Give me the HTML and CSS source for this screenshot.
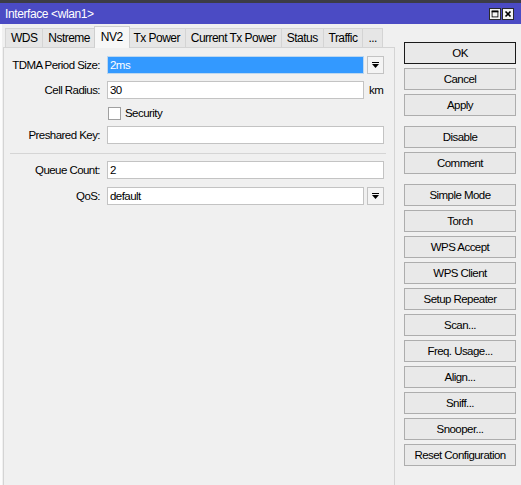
FILE: index.html
```html
<!DOCTYPE html>
<html lang="en">
    <head>
        <meta charset="UTF-8">
        <meta name="viewport" content="width=device-width, initial-scale=1.0">
        <title>Interface &lt;wlan1&gt;</title>
        <link rel="stylesheet" href="styles.css">
    </head>

    <body>
        <div class="window">
            <div class="titlebar">
                <span class="title">Interface &lt;wlan1&gt;</span>
                <div class="title-btns">
                    <span class="tbtn">
                        <svg width="12" height="12" viewBox="0 0 12 12"><rect x="2.5" y="2.5" width="7" height="7" fill="none" stroke="#000" stroke-width="1"/><line x1="2" y1="3" x2="10" y2="3" stroke="#000" stroke-width="2"/></svg>
                    </span>
                    <span class="tbtn">
                        <svg width="12" height="12" viewBox="0 0 12 12"><path d="M3 3 L9 9 M9 3 L3 9" stroke="#000" stroke-width="2"/></svg>
                    </span>
                </div>
            </div>

            <div class="main">
                <div class="left">
                    <div class="tabs">
                        <div class="tab">WDS</div>
                        <div class="tab">Nstreme</div>
                        <div class="tab active">NV2</div>
                        <div class="tab">Tx Power</div>
                        <div class="tab">Current Tx Power</div>
                        <div class="tab">Status</div>
                        <div class="tab">Traffic</div>
                        <div class="tab">...</div>
                    </div>
                    <div class="panel">
                        <div class="row">
                            <label class="lbl">TDMA Period Size:</label>
                            <div class="field selected">2ms</div>
                            <div class="drop">
                                <svg width="9" height="9" viewBox="0 0 9 9"><rect x="1" y="1" width="7" height="1" fill="#000"/><path d="M1 3 H8 L4.5 7 Z" fill="#000"/></svg>
                            </div>
                        </div>
                        <div class="row">
                            <label class="lbl">Cell Radius:</label>
                            <div class="field short">30</div>
                            <span class="unit">km</span>
                        </div>
                        <div class="row check-row">
                            <span class="lbl"></span>
                            <span class="checkbox"></span>
                            <span class="check-text">Security</span>
                        </div>
                        <div class="row key-row">
                            <label class="lbl">Preshared Key:</label>
                            <div class="field"></div>
                        </div>
                        <div class="separator"></div>
                        <div class="row">
                            <label class="lbl">Queue Count:</label>
                            <div class="field">2</div>
                        </div>
                        <div class="row qos-row">
                            <label class="lbl">QoS:</label>
                            <div class="field short">default</div>
                            <div class="drop">
                                <svg width="9" height="9" viewBox="0 0 9 9"><rect x="1" y="1" width="7" height="1" fill="#000"/><path d="M1 3 H8 L4.5 7 Z" fill="#000"/></svg>
                            </div>
                        </div>
                    </div>
                </div>

                <div class="buttons">
                    <div class="btn-group">
                        <button class="btn default">OK</button>
                        <button class="btn">Cancel</button>
                        <button class="btn">Apply</button>
                    </div>
                    <div class="btn-group">
                        <button class="btn">Disable</button>
                        <button class="btn">Comment</button>
                    </div>
                    <div class="btn-group">
                        <button class="btn">Simple Mode</button>
                        <button class="btn">Torch</button>
                        <button class="btn">WPS Accept</button>
                        <button class="btn">WPS Client</button>
                        <button class="btn">Setup Repeater</button>
                        <button class="btn">Scan...</button>
                        <button class="btn">Freq. Usage...</button>
                        <button class="btn">Align...</button>
                        <button class="btn">Sniff...</button>
                        <button class="btn">Snooper...</button>
                        <button class="btn">Reset Configuration</button>
                    </div>
                </div>
            </div>
        </div>
    </body>
</html>
```

FILE: styles.css
```css
body{
    margin: 0;
    background-color: #f0f0f0;
    font-family: "Liberation Sans", Arial, sans-serif;
    font-size: 11.5px;
    letter-spacing: -0.55px;
    color: #000;
}
.window{
    width: 521px;
    height: 485px;
    display: flex;
    flex-direction: column;
    overflow: hidden;
}
.titlebar{
    height: 21px;
    border-top: 3px solid #3c3c46;
    background-color: #4b4bc4;
    display: flex;
    align-items: center;
    justify-content: space-between;
    padding: 0 7px 0 5px;
}
.title{
    color: #fff;
    font-size: 12px;
    letter-spacing: -0.4px;
}
.title-btns{
    display: flex;
    gap: 1px;
}
.tbtn{
    width: 12px;
    height: 12px;
    background-color: #f4f4f4;
    border: 1px solid #2a2a2a;
    box-sizing: border-box;
    display: flex;
    align-items: center;
    justify-content: center;
}
.tbtn svg{
    width: 10px;
    height: 10px;
}
.main{
    flex: 1;
    display: flex;
    gap: 9px;
    border-left: 2px solid #fcfcfc;
}
.left{
    width: 392px;
    display: flex;
    flex-direction: column;
    padding-left: 1px;
    margin-top: 2px;
}
.tabs{
    display: flex;
    align-items: flex-end;
    height: 21px;
    padding-left: 2px;
    position: relative;
    z-index: 1;
}
.tab{
    flex-shrink: 0;
    white-space: nowrap;
    height: 19px;
    line-height: 19px;
    padding: 0 5px;
    background-color: #e6e6e6;
    border: 1px solid #d4d4d4;
    border-bottom: none;
    margin-right: -1px;
    box-sizing: border-box;
    font-size: 12px;
}
.tab.active{
    height: 22px;
    line-height: 20px;
    background-color: #f7f7f7;
    border-color: #cfcfcf;
    margin-left: -1px;
    margin-right: -2px;
    margin-bottom: -1px;
    padding: 0 6px;
    position: relative;
    z-index: 2;
}
.panel{
    flex: 1;
    border: 1px solid #d4d4d4;
    border-bottom: none;
    background-color: #f0f0f0;
    display: flex;
    flex-direction: column;
    padding-top: 8px;
}
.row{
    display: flex;
    align-items: center;
    height: 18px;
    margin-bottom: 7px;
}
.lbl{
    width: 96px;
    text-align: right;
    margin-right: 7px;
}
.field{
    width: 277px;
    height: 18px;
    box-sizing: border-box;
    background-color: #fff;
    border: 1px solid #c3c3c3;
    padding: 0 2px;
    line-height: 16px;
}
.field.selected{
    width: 257px;
    background-color: #3399ff;
    color: #fff;
    border-color: #bcd7ef;
}
.field.short{
    width: 257px;
}
.drop{
    width: 17px;
    height: 18px;
    margin-left: 3px;
    box-sizing: border-box;
    border: 1px solid #c3c3c3;
    background-color: #f4f4f4;
    display: flex;
    align-items: center;
    justify-content: center;
}
.unit{
    margin-left: 5px;
}
.check-row{
    margin-top: -2px;
    margin-bottom: 4px;
}
.checkbox{
    width: 13px;
    height: 13px;
    box-sizing: border-box;
    border: 1px solid #a0a0a0;
    background-color: #fff;
    margin-left: 1px;
}
.check-text{
    margin-left: 4px;
}
.key-row{
    margin-bottom: 9px;
}
.separator{
    height: 1px;
    background-color: #d5d5d5;
    margin: 0 8px 7px 6px;
}
.qos-row{
    margin-top: 1px;
}
.buttons{
    width: 112px;
    display: flex;
    flex-direction: column;
    gap: 10px;
    padding-top: 18px;
}
.btn-group{
    display: flex;
    flex-direction: column;
    gap: 4px;
}
.btn{
    width: 112px;
    height: 22px;
    box-sizing: border-box;
    border: 1px solid #adadad;
    background-color: #e9e9e9;
    font-family: "Liberation Sans", Arial, sans-serif;
    font-size: 11.5px;
    letter-spacing: -0.55px;
    color: #000;
    padding: 0;
}
.btn.default{
    border: 1px solid #1a1a1a;
}
```
